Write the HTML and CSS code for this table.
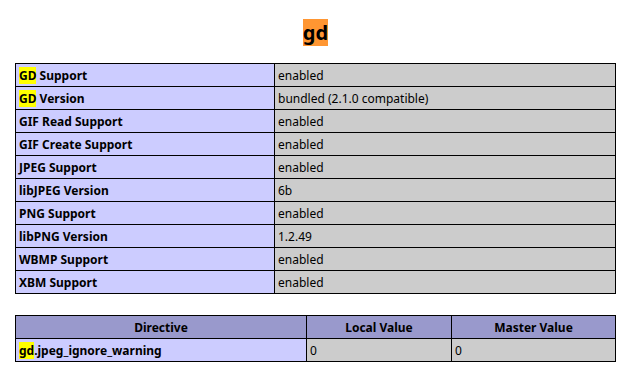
FILE: index.html
```html
<!DOCTYPE html>
<html>
<head>
<meta charset="utf-8">
<title>phpinfo - gd</title>
<link rel="stylesheet" href="styles.css">
</head>
<body>
<div class="center">
  <h2 class="module"><mark class="hl-active">gd</mark></h2>
  <table class="info">
    <colgroup><col class="c1"><col class="c2"></colgroup>
    <tr><td class="e"><mark class="hl">GD</mark> Support</td><td class="v">enabled</td></tr>
    <tr><td class="e"><mark class="hl">GD</mark> Version</td><td class="v">bundled (2.1.0 compatible)</td></tr>
    <tr><td class="e">GIF Read Support</td><td class="v">enabled</td></tr>
    <tr><td class="e">GIF Create Support</td><td class="v">enabled</td></tr>
    <tr><td class="e">JPEG Support</td><td class="v">enabled</td></tr>
    <tr><td class="e">libJPEG Version</td><td class="v">6b</td></tr>
    <tr><td class="e">PNG Support</td><td class="v">enabled</td></tr>
    <tr><td class="e">libPNG Version</td><td class="v">1.2.49</td></tr>
    <tr><td class="e">WBMP Support</td><td class="v">enabled</td></tr>
    <tr><td class="e">XBM Support</td><td class="v">enabled</td></tr>
  </table>
  <table class="info directives">
    <colgroup><col class="d1"><col class="d2"><col class="d3"></colgroup>
    <tr class="h"><th>Directive</th><th>Local Value</th><th>Master Value</th></tr>
    <tr><td class="e"><mark class="hl">gd</mark>.jpeg_ignore_warning</td><td class="v">0</td><td class="v">0</td></tr>
  </table>
</div>
</body>
</html>
```
FILE: styles.css
```css
html, body {
  margin: 0;
  padding: 0;
  background: #ffffff;
  color: #000000;
}
body {
  font-family: "Noto Sans", "Open Sans", "DejaVu Sans", sans-serif;
}
.center {
  width: 631px;
  text-align: center;
  padding-top: 20px;
}
.module {
  margin: 0 0 17px;
  font-size: 20px;
  line-height: 26px;
  font-weight: bold;
}
mark {
  color: #000;
  padding: 0;
}
.hl-active {
  background: #ff9632;
}
.hl {
  background: #ffff00;
}
.info {
  border-collapse: collapse;
  width: 600px;
  margin: 0 auto;
  text-align: left;
  table-layout: fixed;
}
.info + .info {
  margin-top: 21px;
}
.c1 { width: 259px; }
.c2 { width: 341px; }
.d1 { width: 291px; }
.d2 { width: 145px; }
.d3 { width: 164px; }
td, th {
  border: 1px solid #000000;
  font-size: 12px;
  line-height: 16px;
  padding: 4px 3px 2px;
  vertical-align: baseline;
  white-space: nowrap;
}
th {
  text-align: center;
}
.e {
  background: #ccccff;
  font-weight: bold;
}
.h th {
  background: #9999cc;
  font-weight: bold;
}
.v {
  background: #cccccc;
}
```
